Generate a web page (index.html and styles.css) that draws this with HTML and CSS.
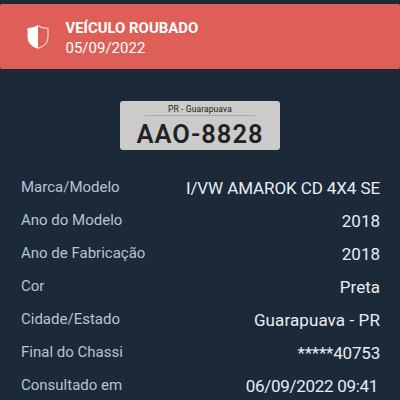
FILE: index.html
```html
<!DOCTYPE html>
<html lang="pt-BR">
<head>
  <meta charset="UTF-8">
  <meta name="viewport" content="width=device-width, initial-scale=1.0">
  <title>Consulta de Veículo</title>
  <link rel="stylesheet" href="styles.css">
</head>
<body>

  <!-- Alert -->
  <div class="alert">
    <svg class="shield" viewBox="0 0 22 24" width="22" height="24">
      <path d="M11 0.8 C8 2.6 4.5 3.3 1 3.5 V12 C1 18 5 21.5 11 23.2 C17 21.5 21 18 21 12 V3.5 C17.5 3.3 14 2.6 11 0.8 Z" fill="none" stroke="#f8dedc" stroke-width="1.1"/>
      <path d="M11 0.8 C8 2.6 4.5 3.3 1 3.5 V12 C1 18 5 21.5 11 23.2 Z" fill="#fff"/>
    </svg>
    <div class="alert-text">
      <strong>VEÍCULO ROUBADO</strong>
      <span>05/09/2022</span>
    </div>
  </div>

  <!-- Plate -->
  <div class="plate">
    <div class="plate-city"><span>PR - Guarapuava</span></div>
    <div class="plate-number"><span>AAO-8828</span></div>
  </div>

  <!-- Vehicle details -->
  <dl class="details">
    <div class="row"><dt>Marca/Modelo</dt><dd class="model">I/VW AMAROK CD 4X4 SE</dd></div>
    <div class="row"><dt>Ano do Modelo</dt><dd>2018</dd></div>
    <div class="row"><dt>Ano de Fabricação</dt><dd>2018</dd></div>
    <div class="row"><dt>Cor</dt><dd>Preta</dd></div>
    <div class="row"><dt>Cidade/Estado</dt><dd class="city">Guarapuava - PR</dd></div>
    <div class="row"><dt>Final do Chassi</dt><dd class="chassi">*****40753</dd></div>
    <div class="row"><dt>Consultado em</dt><dd class="date">06/09/2022 09:41</dd></div>
  </dl>

</body>
</html>
```
FILE: styles.css
```css
* {
  box-sizing: border-box;
}

body {
  margin: 0;
  padding-top: 4px;
  height: 400px;
  background: #1b2939;
  font-family: Roboto, sans-serif;
  overflow: hidden;
}

.alert {
  display: flex;
  align-items: center;
  height: 65px;
  padding-left: 27px;
  background: #dd5f57;
  border-radius: 2px;
  color: #fff;
}

.shield {
  margin-right: 16.5px;
}

.alert-text {
  padding-top: 2px;
  font-size: 15px;
  line-height: 20px;
}

.alert-text strong,
.alert-text span {
  display: block;
}

.alert-text strong {
  font-size: 14.9px;
}

.plate {
  width: 160px;
  height: 49px;
  margin: 32px auto 0;
  background: #cbcbcb;
  border-radius: 3px;
  color: #222;
  text-align: center;
}

.plate-city {
  width: 110px;
  height: 15px;
  margin: 0 auto;
  border-bottom: 1px solid #aaa;
  font-size: 8.5px;
  line-height: 16px;
  letter-spacing: 0.1px;
}

.plate-number {
  font-size: 25.5px;
  font-weight: 600;
  line-height: 36px;
  letter-spacing: 1px;
}

.details {
  margin: 21px 20px 0 21px;
}

.row {
  display: flex;
  justify-content: space-between;
  height: 33px;
  line-height: 33px;
}

.row dt {
  font-size: 15px;
  color: #b8c3d3;
}

.row dd {
  margin: 0;
  padding-top: 1px;
  font-size: 17px;
  color: #e8ecf2;
}

.row .model {
  letter-spacing: -0.1px;
}

.row .city {
  letter-spacing: 0.1px;
}

.row .chassi {
  letter-spacing: -0.2px;
}

.row .date {
  padding-right: 2px;
  letter-spacing: -0.3px;
}
```
